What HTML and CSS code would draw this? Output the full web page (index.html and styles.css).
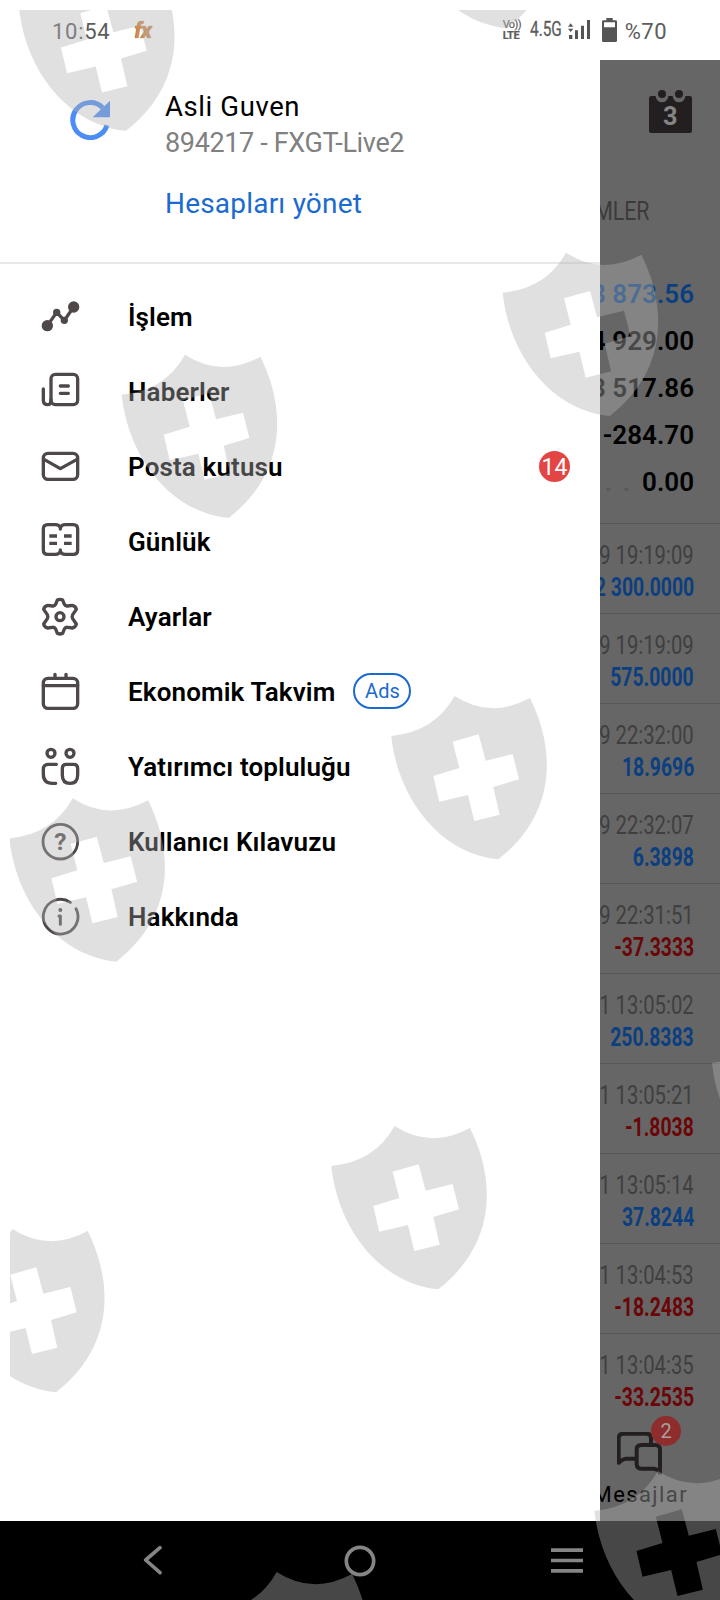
FILE: index.html
```html
<!DOCTYPE html>
<html lang="tr">
<head>
  <meta charset="UTF-8" />
  <meta name="viewport" content="width=device-width, initial-scale=1" />
  <title>Hesaplar</title>
  <link rel="stylesheet" href="styles.css">
</head>
<body>
  <div class="screen">
    <header class="status-bar">
      <span class="clock">10:54</span>
      <span class="app-logo">fx</span>
      <div class="status-right">
        <div class="volte"><span>Vo))</span><b>LTE</b></div>
        <span class="network">4.5G</span>
        <svg class="signal" viewBox="0 0 66 57">
          <path d="M0 20l8-10 8 10zM0 26l8 10 8-10zM3 45h10v12H3zM21 31h9v26h-9zM39 17h9v40h-9zM57 0h9v57h-9z" />
        </svg>
        <svg class="battery" viewBox="0 0 45 72">
          <path d="M13 0h19v7h9q4 0 4 4v57q0 4-4 4H4q-4 0-4-4V11q0-4 4-4h9zM6 13v15h33V13z" fill-rule="evenodd" />
        </svg>
        <span class="percent">%70</span>
      </div>
    </header>

    <div class="main">
      <aside class="drawer">
        <section class="account">
          <svg class="refresh" viewBox="0 0 120 120">
            <path class="ring" d="M98 23A52.500 52.500 0 1 0 111 76" />
            <path class="head" d="M120 2v50H68z" />
          </svg>
          <div class="account-info">
            <div class="name">Asli Guven</div>
            <div class="login">894217 - FXGT-Live2</div>
            <a class="manage">Hesapları yönet</a>
          </div>
        </section>

        <nav class="menu">
          <div class="item">
            <svg class="icon" viewBox="0 0 126 126"><path d="M22 89L50 49L73 73L101 33" /><g class="solid"><circle cx="22" cy="89" r="17" /><circle cx="50" cy="49" r="11" /><circle cx="73" cy="73" r="11" /><circle cx="101" cy="33" r="17" /></g></svg>
            <span class="label">İşlem</span>
          </div>
          <div class="item">
            <svg class="icon" viewBox="0 0 126 126"><rect x="33" y="10" width="80" height="91" rx="13" /><path d="M10 54V88Q10 101 23 101Q33 101 33 86M61 45h24M61 67h24" /></svg>
            <span class="label">Haberler</span>
          </div>
          <div class="item">
            <svg class="icon" viewBox="0 0 126 126"><rect x="10" y="22" width="103" height="78" rx="14" /><path d="M12 40L61 68L111 40" /></svg>
            <span class="label">Posta kutusu</span>
            <span class="count">14</span>
          </div>
          <div class="item">
            <svg class="icon" viewBox="0 0 126 126"><path d="M61 20Q57 11 47 11H23Q10 11 10 24V87Q10 100 23 100H47Q57 100 61 91Q65 100 75 100H100Q113 100 113 87V24Q113 11 100 11H75Q65 11 61 20zM61 20v4M61 91v-4" /><path class="dash" d="M28 45h23M72 45h23M28 67h23M72 67h23" /></svg>
            <span class="label">Günlük</span>
          </div>
          <div class="item">
            <svg class="icon" viewBox="0 0 126 126"><path d="M52 12Q60 8 68 12L73 25Q76 31 83 30L97 28Q107 30 109 40L98 56Q95 62 98 68L109 84Q107 94 97 96L83 94Q76 93 73 99L68 112Q60 116 52 112L47 99Q44 93 37 94L23 96Q13 94 11 84L22 68Q25 62 22 56L11 40Q13 30 23 28L37 30Q44 31 47 25z" /><circle cx="60" cy="62" r="12" /></svg>
            <span class="label">Ayarlar</span>
          </div>
          <div class="item">
            <svg class="icon" viewBox="0 0 126 126"><rect x="10" y="22" width="103" height="90" rx="14" /><path d="M10 44H113M45 10V20M78 10V20" /></svg>
            <span class="label">Ekonomik Takvim</span>
            <span class="ads">Ads</span>
          </div>
          <div class="item">
            <svg class="icon" viewBox="0 0 126 126"><circle cx="33" cy="22" r="12" /><circle cx="90" cy="22" r="12" /><path d="M49 55H25Q10 55 10 70V84Q10 112 37 112H47M79 55H101Q113 55 113 67V87Q113 112 90 112Q67 112 67 87V67Q67 55 79 55z" /></svg>
            <span class="label">Yatırımcı topluluğu</span>
          </div>
          <div class="item">
            <svg class="icon thin" viewBox="0 0 126 126"><circle cx="61" cy="62" r="52" /><text x="61" y="88" text-anchor="middle">?</text></svg>
            <span class="label">Kullanıcı Kılavuzu</span>
          </div>
          <div class="item">
            <svg class="icon thin" viewBox="0 0 126 126"><path d="M91 19A52 52 0 1 0 108 38" /><path class="stem" d="M57 60H61V85" /><circle class="dot" cx="61" cy="42" r="6" /></svg>
            <span class="label">Hakkında</span>
          </div>
        </nav>
      </aside>

      <section class="history">
        <div class="toolbar">
          <svg class="calendar" viewBox="0 0 129 129">
            <path d="M7 18H20A19 19 0 0 0 58 18H71A19 19 0 0 0 109 18H122Q129 18 129 25V122Q129 129 122 129H7Q0 129 0 122V25Q0 18 7 18z" />
            <circle cx="39" cy="12" r="12" /><circle cx="90" cy="12" r="12" />
            <text x="64" y="106" text-anchor="middle">3</text>
          </svg>
        </div>
        <div class="tab"><span class="narrow">MLER</span></div>
        <div class="summary">
          <div class="blue">3 873.56</div>
          <div>4 929.00</div>
          <div>3 517.86</div>
          <div>-284.70</div>
          <div><span class="dots">. .</span>0.00</div>
        </div>
        <div class="deals">
          <div class="deal"><span class="time">9 19:19:09</span><b class="value">2 300.0000</b></div>
          <div class="deal"><span class="time">9 19:19:09</span><b class="value">575.0000</b></div>
          <div class="deal"><span class="time">9 22:32:00</span><b class="value">18.9696</b></div>
          <div class="deal"><span class="time">9 22:32:07</span><b class="value">6.3898</b></div>
          <div class="deal"><span class="time">9 22:31:51</span><b class="value loss">-37.3333</b></div>
          <div class="deal"><span class="time">1 13:05:02</span><b class="value">250.8383</b></div>
          <div class="deal"><span class="time">1 13:05:21</span><b class="value loss">-1.8038</b></div>
          <div class="deal"><span class="time">1 13:05:14</span><b class="value">37.8244</b></div>
          <div class="deal"><span class="time">1 13:04:53</span><b class="value loss">-18.2483</b></div>
          <div class="deal"><span class="time">1 13:04:35</span><b class="value loss">-33.2535</b></div>
        </div>
        <div class="messages">
          <div class="chat">
            <svg viewBox="0 0 135 129">
              <path d="M102 34V19Q102 5 88 5H19Q5 5 5 19V92Q18 80 28 80H54M73 39H115Q129 39 129 53V122Q122 110 108 110H73Q59 110 59 96V53Q59 39 73 39z" />
            </svg>
            <span class="unread">2</span>
          </div>
          <span class="caption">Mesajlar</span>
        </div>
      </section>
    </div>

    <footer class="nav-bar">
      <svg viewBox="0 0 57 93"><path d="M51 8L8 45L51 83" /></svg>
      <svg class="home" viewBox="0 0 96 96"><circle cx="48" cy="48" r="41" /></svg>
      <svg class="recent" viewBox="0 0 96 75"><path d="M0 6.500H96M0 37.500H96M0 68.500H96" /></svg>
    </footer>

    <!-- shield watermark over the whole screen -->
    <svg class="watermark" viewBox="0 0 720 1600">
      <defs>
        <path id="shield" transform="scale(.33333)" fill-rule="evenodd" d="M0 120Q130 108 190 0Q298 70 416 6C486 145 507 345 321 490C140 472 18 300 0 120zM184 137L262 115L283 194L364 174L383 250L306 273L325 356L249 375L230 297L144 317L126 240L204 216z" />
        <clipPath id="area"><rect x="10" y="10" width="710" height="1590" /></clipPath>
      </defs>
      <g clip-path="url(#area)">
        <use href="#shield" x="19" y="-32.500" />
        <use href="#shield" x="400" y="-135" />
        <use href="#shield" x="121.700" y="354.700" />
        <use href="#shield" x="502.700" y="252.700" />
        <use href="#shield" x="391.300" y="696" />
        <use href="#shield" x="9.400" y="798.300" />
        <use href="#shield" x="331.300" y="1126" />
        <use href="#shield" x="-51" y="1229" />
        <use href="#shield" x="712" y="1022.700" />
        <use href="#shield" x="213.400" y="1572" />
        <use href="#shield" x="594.500" y="1471" />
      </g>
    </svg>
  </div>
</body>
</html>
```
FILE: styles.css
```css
:root {
  --link: #1b6ad0;
  --icon: #4f4848;
  --badge: #e34444;
  --dim-bg: #666;
  --dim-line: #585858;
  --dim-blue: #0b3f80;
  --dim-red: #6b0508;
}

* {
  box-sizing: border-box;
}

body {
  margin: 0;
  font-family: Roboto, "Liberation Sans", sans-serif;
  background: #fff;
}

.screen {
  position: relative;
  width: 720px;
  height: 1600px;
  overflow: hidden;
  display: flex;
  flex-direction: column;
}

/* status bar */
.status-bar {
  height: 60px;
  padding: 2px 53px 0 52px;
  display: flex;
  align-items: center;
  color: #5c5c5c;
  font-size: 22px;
}

.clock {
  letter-spacing: 0.7px;
}

.app-logo {
  margin-left: 24px;
  font-size: 22px;
  font-weight: 700;
  font-style: italic;
  letter-spacing: -1px;
  line-height: 20px;
  color: #d58a4b;
  text-shadow: 0 0 1px #6b4a30;
}

.status-right {
  margin-left: auto;
  display: flex;
  align-items: center;
}

.volte {
  display: flex;
  flex-direction: column;
  font-size: 11px;
  line-height: 11px;
  width: 20px;
  margin: -3px 7px 0 0;
  letter-spacing: -0.6px;
  -webkit-text-stroke: 0.2px;
}

.volte b {
  letter-spacing: -0.3px;
}

.network {
  width: 31px;
  font-size: 20px;
  transform: scaleX(0.77);
  transform-origin: left;
  margin: -4px 7px 0 0;
  white-space: nowrap;
  -webkit-text-stroke: 0.3px;
}

.signal {
  width: 22px;
  height: 19px;
  margin: -3px 12px 0 0;
  fill: #555;
}

.battery {
  width: 15px;
  height: 24px;
  margin: -3px 8px 0 0;
  fill: #555;
}

.percent {
  letter-spacing: 0.5px;
}

.main {
  height: 1461px;
  display: flex;
}

/* drawer */
.drawer {
  width: 600px;
  background: #fff;
}

.account {
  height: 204px;
  border-bottom: 2px solid #e8e8e8;
  display: flex;
  padding: 31px 0 0 70px;
}

.refresh {
  width: 40px;
  height: 40px;
  margin: 9px 55px 0 0;
}

.refresh .ring {
  fill: none;
  stroke: #4b8cf5;
  stroke-width: 15;
}

.refresh .head {
  fill: #4b8cf5;
}

.account-info {
  display: flex;
  flex-direction: column;
  white-space: nowrap;
  font-size: 27px;
  line-height: 32px;
}

.name {
  font-size: 27.5px;
  letter-spacing: 0.6px;
}

.login {
  margin-top: 4px;
  color: #808080;
  letter-spacing: -0.35px;
}

.manage {
  margin-top: 29px;
  color: var(--link);
  font-size: 28px;
  letter-spacing: 0.2px;
}

.menu {
  padding-top: 15px;
}

.item {
  height: 75px;
  padding: 0 30px 0 40px;
  display: flex;
  align-items: center;
}

.icon {
  width: 42px;
  height: 42px;
  margin-right: 46px;
  fill: none;
  stroke: var(--icon);
  stroke-width: 10;
  stroke-linecap: round;
  stroke-linejoin: round;
}

.icon .solid,
.icon .dot {
  fill: var(--icon);
  stroke: none;
}

.icon .dash {
  stroke-linecap: butt;
}

.icon.thin {
  stroke-width: 8.5;
}

.icon .stem {
  stroke-width: 9;
}

.icon text {
  fill: var(--icon);
  stroke: none;
  font-size: 74px;
  font-weight: 700;
}

.label {
  font-size: 26px;
  font-weight: 600;
  letter-spacing: 0.13px;
  white-space: nowrap;
}

.count {
  width: 31px;
  height: 31px;
  margin-left: auto;
  border-radius: 50%;
  background: var(--badge);
  color: #fff;
  font-size: 23px;
  line-height: 33px;
  text-align: center;
}

.ads {
  width: 58px;
  height: 36px;
  margin: -1px 0 0 18px;
  border: 2px solid var(--link);
  border-radius: 18px;
  color: var(--link);
  font-size: 20px;
  line-height: 33px;
  text-align: center;
}

/* dimmed history page behind the drawer */
.history {
  width: 120px;
  background: var(--dim-bg);
  overflow: hidden;
  display: flex;
  flex-direction: column;
}

.toolbar {
  height: 110px;
  padding: 30px 0 0 49px;
}

.calendar {
  width: 43px;
  height: 43px;
  fill: #231f20;
}

.calendar text {
  fill: #858585;
  font-size: 76px;
  font-weight: 700;
}

.tab {
  height: 101px;
  padding: 26px 70px 0 0;
  display: flex;
  justify-content: flex-end;
  font-size: 26px;
  color: #3b3b3b;
}

.narrow {
  transform: scaleX(0.82);
  transform-origin: right;
}

.summary {
  height: 252px;
  padding-right: 26px;
  font-size: 26px;
  font-weight: 600;
  line-height: 47px;
}

.summary div {
  display: flex;
  justify-content: flex-end;
  white-space: pre;
}

.summary .blue {
  color: var(--dim-blue);
}

.summary .dots {
  color: #585858;
  margin-right: 10px;
  letter-spacing: 2px;
}

.deals {
  height: 885px;
  overflow: hidden;
}

.deal {
  height: 90px;
  padding: 16px 26px 0 0;
  border-top: 1px solid var(--dim-line);
  display: flex;
  flex-direction: column;
  align-items: flex-end;
}

.time,
.value {
  font-size: 25px;
  line-height: 32px;
  white-space: nowrap;
  transform: scaleX(0.81);
  transform-origin: right;
}

.time {
  color: #3f3f3f;
}

.value {
  color: var(--dim-blue);
  transform: scaleX(0.775);
}

.loss {
  color: var(--dim-red);
}

.messages {
  flex: 1;
  padding: 24px 32px 0 0;
  display: flex;
  flex-direction: column;
  align-items: flex-end;
}

.chat {
  position: relative;
  width: 45px;
  height: 43px;
  margin-right: 26px;
}

.chat svg {
  width: 45px;
  height: 43px;
  fill: none;
  stroke: #231f20;
  stroke-width: 12;
  stroke-linejoin: round;
}

.unread {
  position: absolute;
  left: 34px;
  top: -16px;
  width: 30px;
  height: 30px;
  border-radius: 50%;
  background: #8f2c2c;
  color: #a8a0a0;
  font-size: 20px;
  line-height: 30px;
  text-align: center;
}

.caption {
  margin-top: 6px;
  font-size: 22px;
  line-height: 28px;
  letter-spacing: 1.4px;
}

/* android navigation */
.nav-bar {
  height: 79px;
  background: #000;
  display: flex;
  align-items: center;
  padding-left: 143px;
}

.nav-bar svg {
  width: 19px;
  height: 31px;
  fill: none;
  stroke: #858585;
  stroke-width: 11;
  stroke-linecap: round;
  stroke-linejoin: round;
}

.nav-bar .home {
  width: 32px;
  height: 32px;
  margin: 0 175px 0 182px;
}

.nav-bar .recent {
  width: 32px;
  height: 25px;
  stroke-linecap: butt;
}

.watermark {
  position: absolute;
  left: 0;
  top: 0;
  width: 720px;
  height: 1600px;
  fill: rgba(178, 178, 178, 0.4);
  pointer-events: none;
}
```
